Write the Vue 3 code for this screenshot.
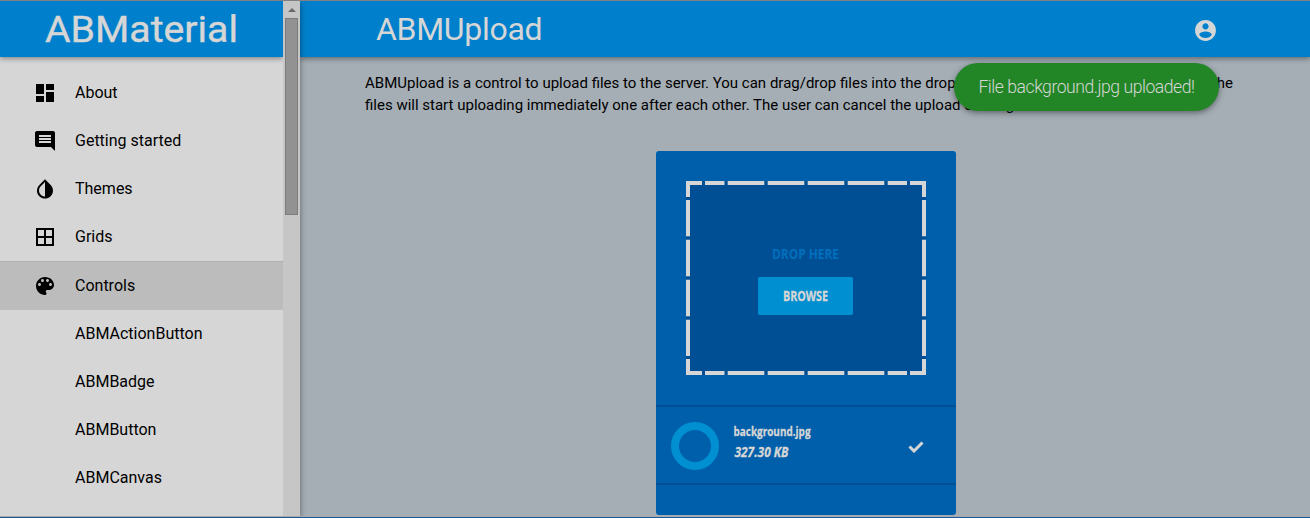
<script setup>
const items = [
  { label: 'About', paths: ['M3 13h8V3H3v10zm0 8h8v-6H3v6zm10 0h8V11h-8v10zm0-18v6h8V3h-8z'] },
  { label: 'Getting started', paths: ['M21.99 4c0-1.1-.89-2-1.99-2H4c-1.1 0-2 .9-2 2v12c0 1.1.9 2 2 2h14l4 4-.01-18zM18 14H6v-2h12v2zm0-3H6V9h12v2zm0-3H6V6h12v2z'] },
  { label: 'Themes', paths: ['M17.66 7.93L12 2.27 6.34 7.93c-3.12 3.12-3.12 8.19 0 11.31C7.9 20.8 9.95 21.58 12 21.58s4.1-.78 5.66-2.34c3.12-3.12 3.12-8.19 0-11.31zM12 19.59c-1.6 0-3.11-.62-4.24-1.76C6.62 16.69 6 15.19 6 13.59s.62-3.11 1.76-4.24L12 5.1v14.49z'] },
  { label: 'Grids', paths: ['M3 3v18h18V3H3zm8 16H5v-6h6v6zm0-8H5V5h6v6zm8 8h-6v-6h6v6zm0-8h-6V5h6v6z'] },
  { label: 'Controls', active: true, paths: ['M12 3c-4.97 0-9 4.03-9 9s4.03 9 9 9c.83 0 1.5-.67 1.5-1.5 0-.39-.15-.74-.39-1.01-.23-.26-.38-.61-.38-.99 0-.83.67-1.5 1.5-1.5H16c2.76 0 5-2.24 5-5 0-4.42-4.03-8-9-8zm-5.5 9c-.83 0-1.5-.67-1.5-1.5S5.67 9 6.5 9 8 9.67 8 10.5 7.33 12 6.5 12zm3-4C8.67 8 8 7.33 8 6.5S8.67 5 9.5 5s1.5.67 1.5 1.5S10.33 8 9.5 8zm5 0c-.83 0-1.5-.67-1.5-1.5S13.67 5 14.5 5s1.5.67 1.5 1.5S15.33 8 14.5 8zm3 4c-.83 0-1.5-.67-1.5-1.5S16.67 9 17.5 9s1.5.67 1.5 1.5-.67 1.5-1.5 1.5z'] },
  { label: 'ABMActionButton' },
  { label: 'ABMBadge' },
  { label: 'ABMButton' },
  { label: 'ABMCanvas' },
]
const across = [[0, 16], [19, 19.5], [41.7, 36.6], [81.7, 36.6], [121.7, 36.6], [161.7, 36.6], [201.7, 19.3], [224, 16]]
const down = [[0, 16], [19, 36.3], [58.7, 36.6], [98.7, 36.6], [138.7, 36.3], [178, 16]]
</script>

<template>
  <div class="page">
    <aside class="side">
      <div class="nav">
        <div class="brand">
          <svg width="196" height="40" viewBox="0 0 196 40">
            <text x="0" y="30.5" textLength="193" lengthAdjust="spacingAndGlyphs">ABMaterial</text>
          </svg>
        </div>
        <ul class="menu">
          <li v-for="item in items" :key="item.label" :class="{ active: item.active }">
            <span class="icon">
              <svg v-if="item.paths" width="24" height="24" viewBox="0 0 24 24">
                <path v-for="(d, i) in item.paths" :key="i" :d="d" />
              </svg>
            </span>
            <span>{{ item.label }}</span>
          </li>
        </ul>
      </div>
      <div class="scroll">
        <span class="arrow"></span>
        <span class="thumb"></span>
      </div>
    </aside>
    <main class="main">
      <header class="top">
        <h1>ABMUpload</h1>
        <svg class="user" width="25" height="25" viewBox="0 0 24 24">
          <path d="M12 2C6.48 2 2 6.48 2 12s4.48 10 10 10 10-4.48 10-10S17.52 2 12 2zm0 3c1.66 0 3 1.34 3 3s-1.34 3-3 3-3-1.34-3-3 1.34-3 3-3zm0 14.2c-2.5 0-4.71-1.28-6-3.22.03-1.99 4-3.08 6-3.08 1.99 0 5.97 1.09 6 3.08-1.29 1.94-3.5 3.22-6 3.22z" />
        </svg>
      </header>
      <p class="intro">
        <span class="first"><span>ABMUpload is a control to upload files to the server. You can drag/drop files into the drop</span><span>zone, or browse for them. All the</span></span>
        <span>files will start uploading immediately one after each other. The user can cancel the upload of a big file.</span>
      </p>
      <section class="card">
        <div class="drop">
          <svg class="dashes" width="240" height="194" viewBox="0 0 240 194">
            <template v-for="[p, n] in across" :key="p">
              <rect :x="p" y="0" :width="n" height="4" />
              <rect :x="p" y="190" :width="n" height="4" />
            </template>
            <template v-for="[p, n] in down" :key="p">
              <rect x="0" :y="p" width="4" :height="n" />
              <rect x="236" :y="p" width="4" :height="n" />
            </template>
          </svg>
          <svg class="hint" width="69" height="20" viewBox="-1 0 69 20">
            <text x="0" y="15" textLength="67" lengthAdjust="spacingAndGlyphs">DROP HERE</text>
          </svg>
          <button class="browse">
            <svg width="47" height="20" viewBox="-1 0 47 20">
              <text x="0" y="15" textLength="45" lengthAdjust="spacingAndGlyphs">BROWSE</text>
            </svg>
          </button>
        </div>
        <div class="file">
          <span class="ring"></span>
          <svg class="info" width="90" height="44" viewBox="-1 0 90 44">
            <text x="0.5" y="17" textLength="77" lengthAdjust="spacingAndGlyphs">background.jpg</text>
            <text class="size" x="1.5" y="37.5" textLength="54" lengthAdjust="spacingAndGlyphs">327.30 KB</text>
          </svg>
          <svg class="check" width="16" height="12" viewBox="0 0 16 12">
            <path d="M1.5 5.5L6 10L14.5 1.5" />
          </svg>
        </div>
      </section>
    </main>
    <div class="toast">File background.jpg uploaded!</div>
  </div>
</template>

<style>
body { background: #a5aeb5; overflow: hidden; }
</style>

<style scoped>
* { box-sizing: border-box; }
.page {
  position: relative;
  display: flex;
  height: 518px;
  border-top: 1px solid #808080;
  border-bottom: 1px solid #1c5a96;
  background: #a5aeb5;
  font-family: Roboto, "Liberation Sans", sans-serif;
  color: #000;
  overflow: hidden;
}
.page::after {
  content: "";
  position: absolute;
  z-index: 3;
  left: 0;
  right: 0;
  bottom: 0;
  height: 1px;
  background: #a6aaad;
}
.side {
  position: relative;
  z-index: 1;
  display: flex;
  flex: none;
  width: 300px;
  background: #d6d6d6;
  box-shadow: 0 2px 5px rgba(0, 0, 0, .3), 0 2px 8px rgba(0, 0, 0, .16);
}
.nav { width: 283px; }
.brand {
  height: 56px;
  padding: 10px 0 0 45px;
  background: #0080cc;
  box-shadow: 0 2px 5px rgba(0, 0, 0, .35);
}
.brand svg { display: block; overflow: visible; }
.brand text {
  font: 400 36.5px Roboto, sans-serif;
  fill: #d6d6d6;
  stroke: #d6d6d6;
  stroke-width: .4;
}
.menu { list-style: none; margin: 0; padding: 12px 0 0; }
.menu li {
  display: flex;
  align-items: center;
  height: 48px;
  font-size: 16px;
  line-height: 24px;
}
.menu li.active { height: 49px; background: #bcbcbc; border-top: 1px solid #b0b0b0; }
.icon { width: 42px; margin-left: 33px; height: 24px; }
.icon svg { display: block; fill: #000; }
.scroll {
  display: flex;
  flex-direction: column;
  align-items: center;
  width: 17px;
  background: #c6c6c6;
}
.arrow {
  margin-top: 7px;
  border: 4px solid transparent;
  border-top: 0;
  border-bottom-color: #686868;
}
.thumb {
  margin: 6px 0 0 0;
  width: 13px;
  height: 197px;
  background: #929292;
  border: 1px solid #7c7c7c;
}
.main { flex: 1; min-width: 0; }
.top {
  display: flex;
  height: 56px;
  padding: 0 92px 0 76px;
  align-items: center;
  justify-content: space-between;
  background: #0080cc;
  color: #d6d6d6;
  box-shadow: 0 2px 5px rgba(0, 0, 0, .38);
}
h1 { margin: 0; font-size: 32px; font-weight: 400; line-height: 56px; letter-spacing: -.3px; }
.user { fill: #d6d6d6; margin-top: 2px; }
.intro {
  display: flex;
  flex-direction: column;
  width: 868px;
  margin: 15px 0 0 65px;
  font-size: 15px;
  line-height: 22px;
  white-space: nowrap;
}
.first { display: flex; justify-content: space-between; }
.card {
  width: 300px;
  height: 364px;
  margin: 35px 0 0 356px;
  padding-top: 30px;
  border-radius: 3px;
  background: #005faa;
}
.drop {
  position: relative;
  display: flex;
  flex-direction: column;
  align-items: center;
  width: 240px;
  height: 194px;
  margin: 0 auto 30px;
  padding: 63px 2px 0 0;
  background: #004f94;
}
.dashes { position: absolute; inset: 0; fill: #d6d6d6; }
.hint, .browse svg, .info { display: block; overflow: visible; font: 700 14px "Open Sans", sans-serif; }
.hint { fill: #0070be; font-size: 15px; }
.browse {
  display: flex;
  align-items: center;
  justify-content: center;
  width: 95px;
  height: 38px;
  margin-top: 13px;
  padding: 0;
  border: 0;
  border-radius: 2px;
  background: #008fd0;
}
.browse svg { fill: #d6d6d6; }
.browse text, .info text { stroke: #d6d6d6; stroke-width: .3; }
.file {
  display: flex;
  align-items: center;
  height: 80px;
  padding: 2px 32px 0 15px;
  border-top: 2px solid #004f94;
  border-bottom: 2px solid #004f94;
}
.ring {
  width: 48px;
  height: 48px;
  border: 8.5px solid #008fd0;
  border-radius: 50%;
}
.info { margin: -10px 0 0 13px; fill: #d6d6d6; font-size: 13px; }
.size { font-style: italic; font-size: 14px; }
.check { margin: 1px 0 0 auto; fill: none; stroke: #d6d6d6; stroke-width: 3; }
.toast {
  position: absolute;
  z-index: 2;
  left: 954px;
  top: 62px;
  width: 265px;
  height: 48px;
  border-radius: 24px;
  background: #228626;
  color: #d6d6d6;
  font-size: 17.6px;
  font-weight: 300;
  line-height: 49px;
  letter-spacing: -.47px;
  text-align: center;
  box-shadow: 0 2px 5px rgba(0, 0, 0, .3), 0 2px 8px rgba(0, 0, 0, .15);
}
</style>
